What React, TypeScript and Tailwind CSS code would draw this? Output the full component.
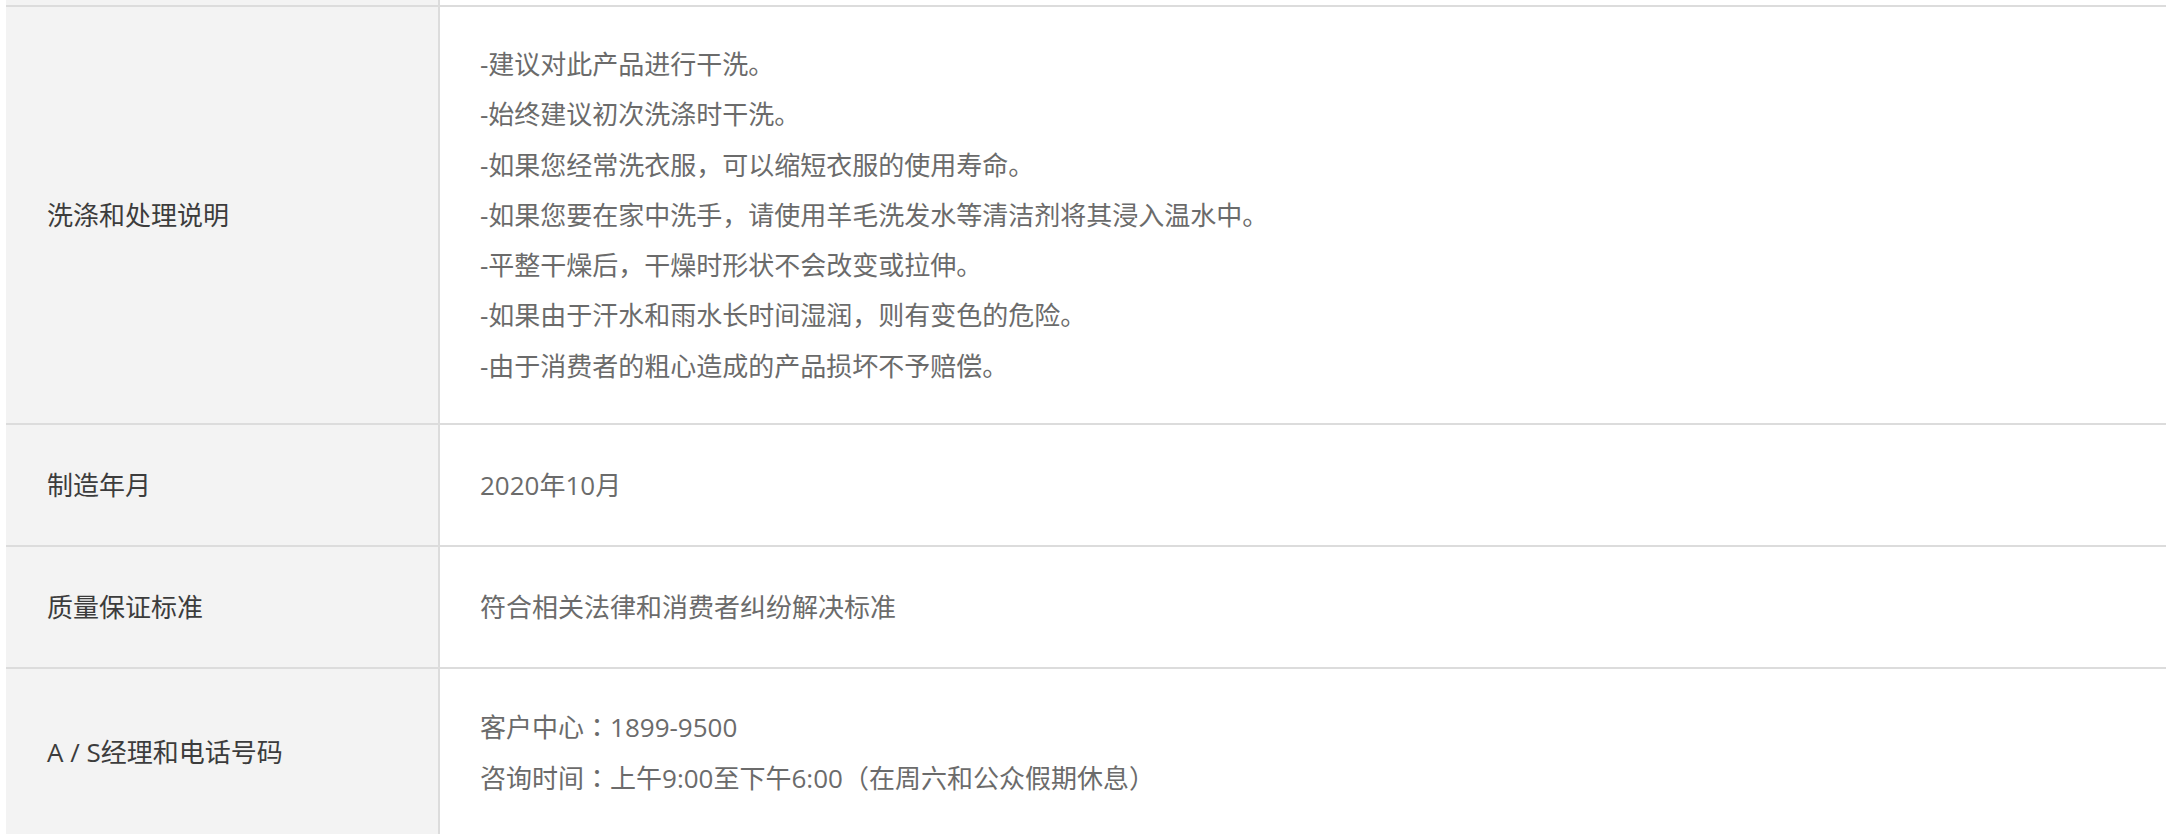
const rows: { label: string; lines: React.ReactNode[] }[] = [
  {
    label: "洗涤和处理说明",
    lines: [
      "-建议对此产品进行干洗。",
      "-始终建议初次洗涤时干洗。",
      "-如果您经常洗衣服，可以缩短衣服的使用寿命。",
      "-如果您要在家中洗手，请使用羊毛洗发水等清洁剂将其浸入温水中。",
      "-平整干燥后，干燥时形状不会改变或拉伸。",
      "-如果由于汗水和雨水长时间湿润，则有变色的危险。",
      "-由于消费者的粗心造成的产品损坏不予赔偿。",
    ],
  },
  { label: "制造年月", lines: ["2020年10月"] },
  { label: "质量保证标准", lines: ["符合相关法律和消费者纠纷解决标准"] },
  {
    label: "A / S经理和电话号码",
    lines: [
      <>
        客户中心<span className="font-['Noto_Sans_CJK_JP',sans-serif]">：</span>1899-9500
      </>,
      <>
        咨询时间<span className="font-['Noto_Sans_CJK_JP',sans-serif]">：</span>上午9:00至下午6:00（在周六和公众假期休息）
      </>,
    ],
  },
];

export default function App() {
  return (
    <div className="min-h-screen bg-white font-['Open_Sans','Noto_Sans_CJK_SC',sans-serif] text-[26px]">
      <div className="ml-[6px] w-[2160px]">
        {/* tail of the previous row */}
        <div className="flex h-[7px] border-b-2 border-[#dcdcdc]">
          <div className="w-[434px] shrink-0 bg-[#f3f3f3] border-r-2 border-[#dcdcdc]" />
          <div className="flex-1" />
        </div>
        {rows.map((r) => (
          <div key={r.label} className="flex min-h-[122px] border-b-2 border-[#dcdcdc]">
            <div className="w-[434px] shrink-0 bg-[#f3f3f3] border-r-2 border-[#dcdcdc] pl-[41px] flex items-center text-[#3c3c3c]">
              {r.label}
            </div>
            <div className="flex-1 pl-[40px] py-[32px] flex flex-col justify-center text-[#6b6b6b] leading-[50.3px]">
              {r.lines.map((l, i) => (
                <p key={i}>{l}</p>
              ))}
            </div>
          </div>
        ))}
      </div>
    </div>
  );
}
